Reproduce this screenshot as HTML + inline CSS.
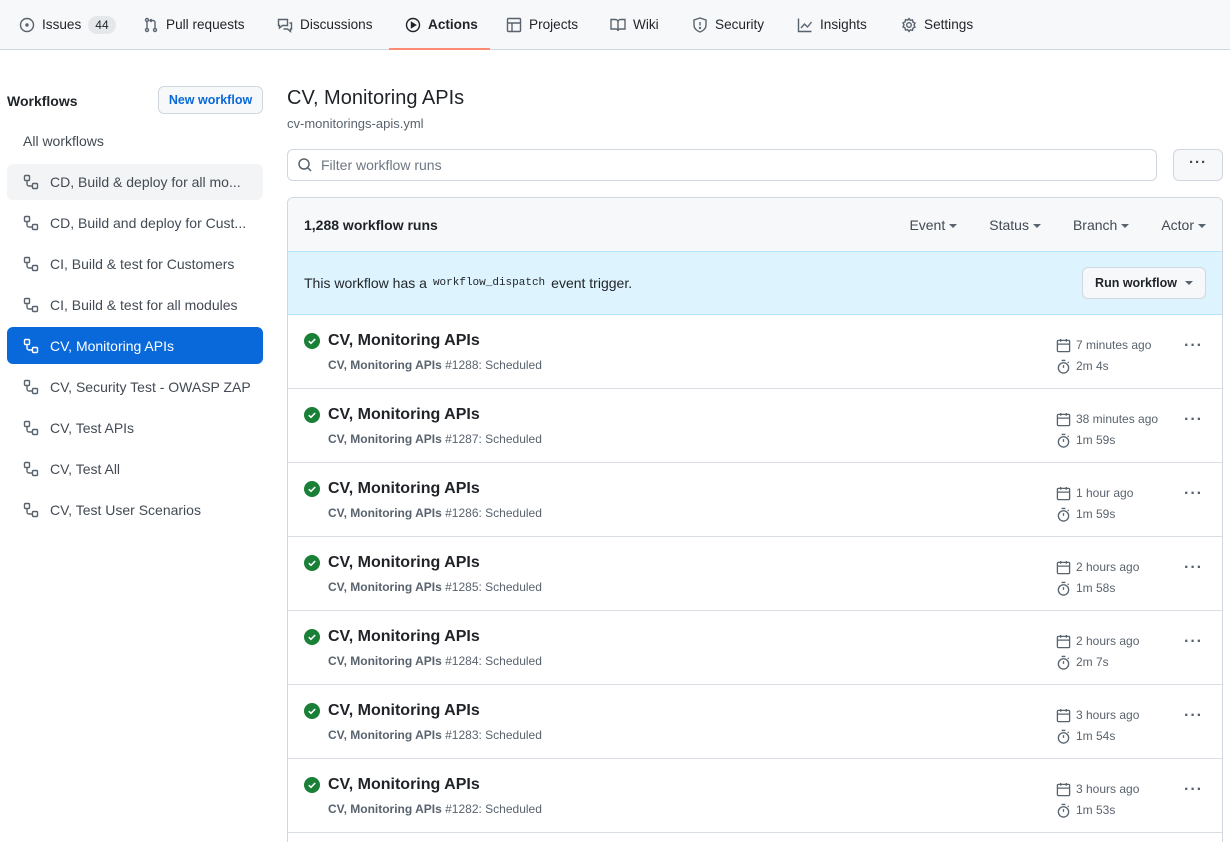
<!DOCTYPE html>
<html><head><meta charset="utf-8"><style>
*{box-sizing:border-box;margin:0;padding:0}
html,body{width:1230px;height:842px;overflow:hidden}
body{background:#fff;font-family:"Liberation Sans",sans-serif;color:#1f2328;font-size:14px;position:relative}
.nav{height:50px;background:#f6f8fa;border-bottom:1px solid #d0d7de;position:relative}
.tab{position:absolute;top:0;height:49px;display:flex;align-items:center;gap:7px;font-size:13.6px;color:#1f2328;white-space:nowrap}
.tab svg{width:16px;height:16px;fill:none;stroke:#59636e;stroke-width:1.4}
.tab.act{font-weight:bold}
.tab.act:after{content:"";position:absolute;left:-16px;right:-12px;bottom:-1px;height:2px;background:#fd8c73}
.cnt{background:#e5e8eb;border-radius:10px;padding:2px 7px;font-size:12px}
.side{position:absolute;left:7px;top:86px;width:256px}
.wt{position:absolute;left:0;top:7px;font-weight:bold;font-size:14px}
.nw{position:absolute;left:151px;top:0;width:105px;height:28px;border:1px solid #d0d7de;border-radius:6px;background:#f6f8fa;color:#0969da;font-size:12.5px;font-weight:bold;display:flex;align-items:center;justify-content:center}
.it{position:absolute;left:0;width:256px;height:36px;border-radius:6px;display:flex;align-items:center;padding-left:16px;gap:11px;color:#424a53;font-size:14px;white-space:nowrap}
.it svg{width:16px;height:16px;fill:none;stroke:#59636e;stroke-width:1.4}
.it.sel{background:#0969da;color:#fff}
.it.sel svg{stroke:#fff}
.it.hov{background:#f3f4f6}
.main{position:absolute;left:287px;top:0}
h1{position:absolute;left:0;top:87px;font-size:20px;font-weight:normal;white-space:nowrap}
.yml{position:absolute;left:0;top:116px;font-size:13px;color:#59636e;white-space:nowrap}
.filter{position:absolute;left:0;top:149px;width:870px;height:32px;border:1px solid #d0d7de;border-radius:6px;display:flex;align-items:center;padding-left:9px;gap:8px;color:#6e7781;font-size:14px}
.more{position:absolute;left:886px;top:149px;width:50px;height:32px;border:1px solid #d0d7de;border-radius:6px;background:#f6f8fa;text-align:center;line-height:26px;color:#424a53;font-size:15px;font-weight:bold;letter-spacing:1px}
.box{position:absolute;left:0;top:197px;width:936px;height:650px;border:1px solid #d0d7de;border-radius:6px;overflow:hidden}
.hd{height:54px;background:#f6f8fa;border-bottom:1px solid #b6e3ff;display:flex;align-items:center;padding:0 16px;font-size:14px}
.hd b{flex:1}
.hd span{margin-left:32px;color:#424a53}
.car{display:inline-block;border:4px solid transparent;border-top-color:#59636e;border-bottom:0;margin-left:4px;vertical-align:middle}
.ban{height:63px;background:#ddf4ff;border-bottom:1px solid #b6e3ff;display:flex;align-items:center;padding:0 16px;font-size:14px}
.ban code{font-family:"Liberation Mono",monospace;font-size:11px;margin:0 6px}
.ban .sp{flex:1}
.run{height:32px;border:1px solid #d0d7de;border-radius:6px;background:#f6f8fa;padding:0 12px;display:flex;align-items:center;font-weight:bold;font-size:12.5px}
.row{height:74px;border-bottom:1px solid #d8dee4;position:relative}
.ck{position:absolute;left:16px;top:18px}
.rt{position:absolute;left:40px;top:17px;font-size:16px;font-weight:bold;color:#1f2328;white-space:nowrap}
.rs{position:absolute;left:40px;top:43px;font-size:12px;color:#59636e;white-space:nowrap}
.meta{position:absolute;left:768px;top:20px;font-size:12px;color:#59636e;line-height:21px}
.meta div{display:flex;align-items:center;gap:5px;white-space:nowrap}
.meta svg{width:15px;height:15px;fill:none;stroke:#59636e;stroke-width:1.4}
.dots{position:absolute;left:896px;top:22px;font-size:16px;font-weight:bold;color:#59636e;letter-spacing:1px}
</style></head><body>
<div class="nav">
<div class="tab" style="left:19px"><svg viewBox="0 0 16 16"><circle cx="8" cy="8" r="6.5"/><circle cx="8" cy="8" r="1" fill="#59636e"/></svg>Issues <span class="cnt">44</span></div>
<div class="tab" style="left:143px"><svg viewBox="0 0 16 16"><circle cx="4" cy="3" r="1.5"/><circle cx="4" cy="13" r="1.5"/><circle cx="12" cy="13" r="1.5"/><path d="M4 4.5v7M12 11.5V5.5a2 2 0 0 0-2-2H7M8.5 2 7 3.5 8.5 5"/></svg>Pull requests</div>
<div class="tab" style="left:277px"><svg viewBox="0 0 16 16"><path d="M1.5 2.5h9v6h-5l-3 2.5v-2.5h-1zM12.5 6h2v6h-1v2.5l-3-2.5h-4"/></svg>Discussions</div>
<div class="tab act" style="left:405px"><svg viewBox="0 0 16 16" style="stroke:#1f2328"><circle cx="8" cy="8" r="6.5"/><path d="M6.5 5.5v5l4-2.5z" fill="#1f2328"/></svg>Actions</div>
<div class="tab" style="left:506px"><svg viewBox="0 0 16 16"><rect x="1.5" y="1.5" width="13" height="13" rx="1"/><path d="M1.5 6h13M6 6v8.5"/></svg>Projects</div>
<div class="tab" style="left:610px"><svg viewBox="0 0 16 16"><path d="M1 2.5h4.5a2.5 2.5 0 0 1 2.5 2.5v9a2 2 0 0 0-2-2H1zM15 2.5h-4.5A2.5 2.5 0 0 0 8 5v9a2 2 0 0 1 2-2h5z"/></svg>Wiki</div>
<div class="tab" style="left:692px"><svg viewBox="0 0 16 16"><path d="M8 1 2 3v5c0 3.5 3 6 6 7 3-1 6-3.5 6-7V3z"/><path d="M8 5v3.5"/><circle cx="8" cy="11" r=".5"/></svg>Security</div>
<div class="tab" style="left:797px"><svg viewBox="0 0 16 16"><path d="M1.5 1.5v13h13M4 11l3.5-4 3 3 4-5"/></svg>Insights</div>
<div class="tab" style="left:901px"><svg viewBox="0 0 16 16"><circle cx="8" cy="8" r="2.3"/><path d="M8 1.5l1.3 1.8 2.2-.4.5 2.2 2 1-1 2 1 2-2 1-.5 2.2-2.2-.4L8 14.5l-1.3-1.8-2.2.4-.5-2.2-2-1 1-2-1-2 2-1 .5-2.2 2.2.4z"/></svg>Settings</div>
</div>

<div class="side">
<div class="wt">Workflows</div>
<div class="nw">New workflow</div>
<div class="it" style="top:37px">All workflows</div>
<div class="it hov" style="top:78px"><svg viewBox="0 0 16 16"><rect x="1.5" y="1.5" width="5" height="5" rx="1"/><rect x="9.5" y="9.5" width="5" height="5" rx="1"/><path d="M4 6.5V10a2 2 0 0 0 2 2h3.5"/></svg>CD, Build &amp; deploy for all mo...</div>
<div class="it" style="top:119px"><svg viewBox="0 0 16 16"><rect x="1.5" y="1.5" width="5" height="5" rx="1"/><rect x="9.5" y="9.5" width="5" height="5" rx="1"/><path d="M4 6.5V10a2 2 0 0 0 2 2h3.5"/></svg>CD, Build and deploy for Cust...</div>
<div class="it" style="top:160px"><svg viewBox="0 0 16 16"><rect x="1.5" y="1.5" width="5" height="5" rx="1"/><rect x="9.5" y="9.5" width="5" height="5" rx="1"/><path d="M4 6.5V10a2 2 0 0 0 2 2h3.5"/></svg>CI, Build &amp; test for Customers</div>
<div class="it" style="top:201px"><svg viewBox="0 0 16 16"><rect x="1.5" y="1.5" width="5" height="5" rx="1"/><rect x="9.5" y="9.5" width="5" height="5" rx="1"/><path d="M4 6.5V10a2 2 0 0 0 2 2h3.5"/></svg>CI, Build &amp; test for all modules</div>
<div class="it sel" style="top:241px;height:37px"><svg viewBox="0 0 16 16"><rect x="1.5" y="1.5" width="5" height="5" rx="1"/><rect x="9.5" y="9.5" width="5" height="5" rx="1"/><path d="M4 6.5V10a2 2 0 0 0 2 2h3.5"/></svg>CV, Monitoring APIs</div>
<div class="it" style="top:283px"><svg viewBox="0 0 16 16"><rect x="1.5" y="1.5" width="5" height="5" rx="1"/><rect x="9.5" y="9.5" width="5" height="5" rx="1"/><path d="M4 6.5V10a2 2 0 0 0 2 2h3.5"/></svg>CV, Security Test - OWASP ZAP</div>
<div class="it" style="top:324px"><svg viewBox="0 0 16 16"><rect x="1.5" y="1.5" width="5" height="5" rx="1"/><rect x="9.5" y="9.5" width="5" height="5" rx="1"/><path d="M4 6.5V10a2 2 0 0 0 2 2h3.5"/></svg>CV, Test APIs</div>
<div class="it" style="top:365px"><svg viewBox="0 0 16 16"><rect x="1.5" y="1.5" width="5" height="5" rx="1"/><rect x="9.5" y="9.5" width="5" height="5" rx="1"/><path d="M4 6.5V10a2 2 0 0 0 2 2h3.5"/></svg>CV, Test All</div>
<div class="it" style="top:406px"><svg viewBox="0 0 16 16"><rect x="1.5" y="1.5" width="5" height="5" rx="1"/><rect x="9.5" y="9.5" width="5" height="5" rx="1"/><path d="M4 6.5V10a2 2 0 0 0 2 2h3.5"/></svg>CV, Test User Scenarios</div>
</div>

<div class="main">
<h1>CV, Monitoring APIs</h1>
<div class="yml">cv-monitorings-apis.yml</div>
<div class="filter"><svg width="16" height="16" viewBox="0 0 16 16" fill="none" stroke="#59636e" stroke-width="1.5"><circle cx="7" cy="7" r="5"/><path d="M10.5 10.5 14 14"/></svg>Filter workflow runs</div>
<div class="more">···</div>
<div class="box">
<div class="hd"><b>1,288 workflow runs</b><span>Event<i class="car"></i></span><span>Status<i class="car"></i></span><span>Branch<i class="car"></i></span><span>Actor<i class="car"></i></span></div>
<div class="ban">This workflow has a<code>workflow_dispatch</code>event trigger.<span class="sp"></span><div class="run">Run workflow<i class="car" style="margin-left:8px"></i></div></div>
<div id="rows"></div>
</div>
</div>
<script>
var d=[[1288,"7 minutes ago","2m 4s"],[1287,"38 minutes ago","1m 59s"],[1286,"1 hour ago","1m 59s"],[1285,"2 hours ago","1m 58s"],[1284,"2 hours ago","2m 7s"],[1283,"3 hours ago","1m 54s"],[1282,"3 hours ago","1m 53s"]];
var h="";d.forEach(function(r){h+='<div class="row"><svg class="ck" width="16" height="16" viewBox="0 0 16 16"><circle cx="8" cy="8" r="8" fill="#1a7f37"/><path d="M4.8 8.2 7 10.3l4.2-4.3" fill="none" stroke="#fff" stroke-width="1.6"/></svg><div class="rt">CV, Monitoring APIs</div><div class="rs"><b>CV, Monitoring APIs</b> #'+r[0]+': Scheduled</div><div class="meta"><div><svg viewBox="0 0 16 16"><rect x="1.5" y="2.5" width="13" height="12" rx="1"/><path d="M1.5 6.5h13M5 1v3M11 1v3"/></svg>'+r[1]+'</div><div><svg viewBox="0 0 16 16"><circle cx="8" cy="9.5" r="5.5"/><path d="M8 9.5V6.5M6 1.5h4M12.5 4l1 -1"/></svg>'+r[2]+'</div></div><div class="dots">···</div></div>'});
document.getElementById("rows").innerHTML=h;
</script>
</body></html>
